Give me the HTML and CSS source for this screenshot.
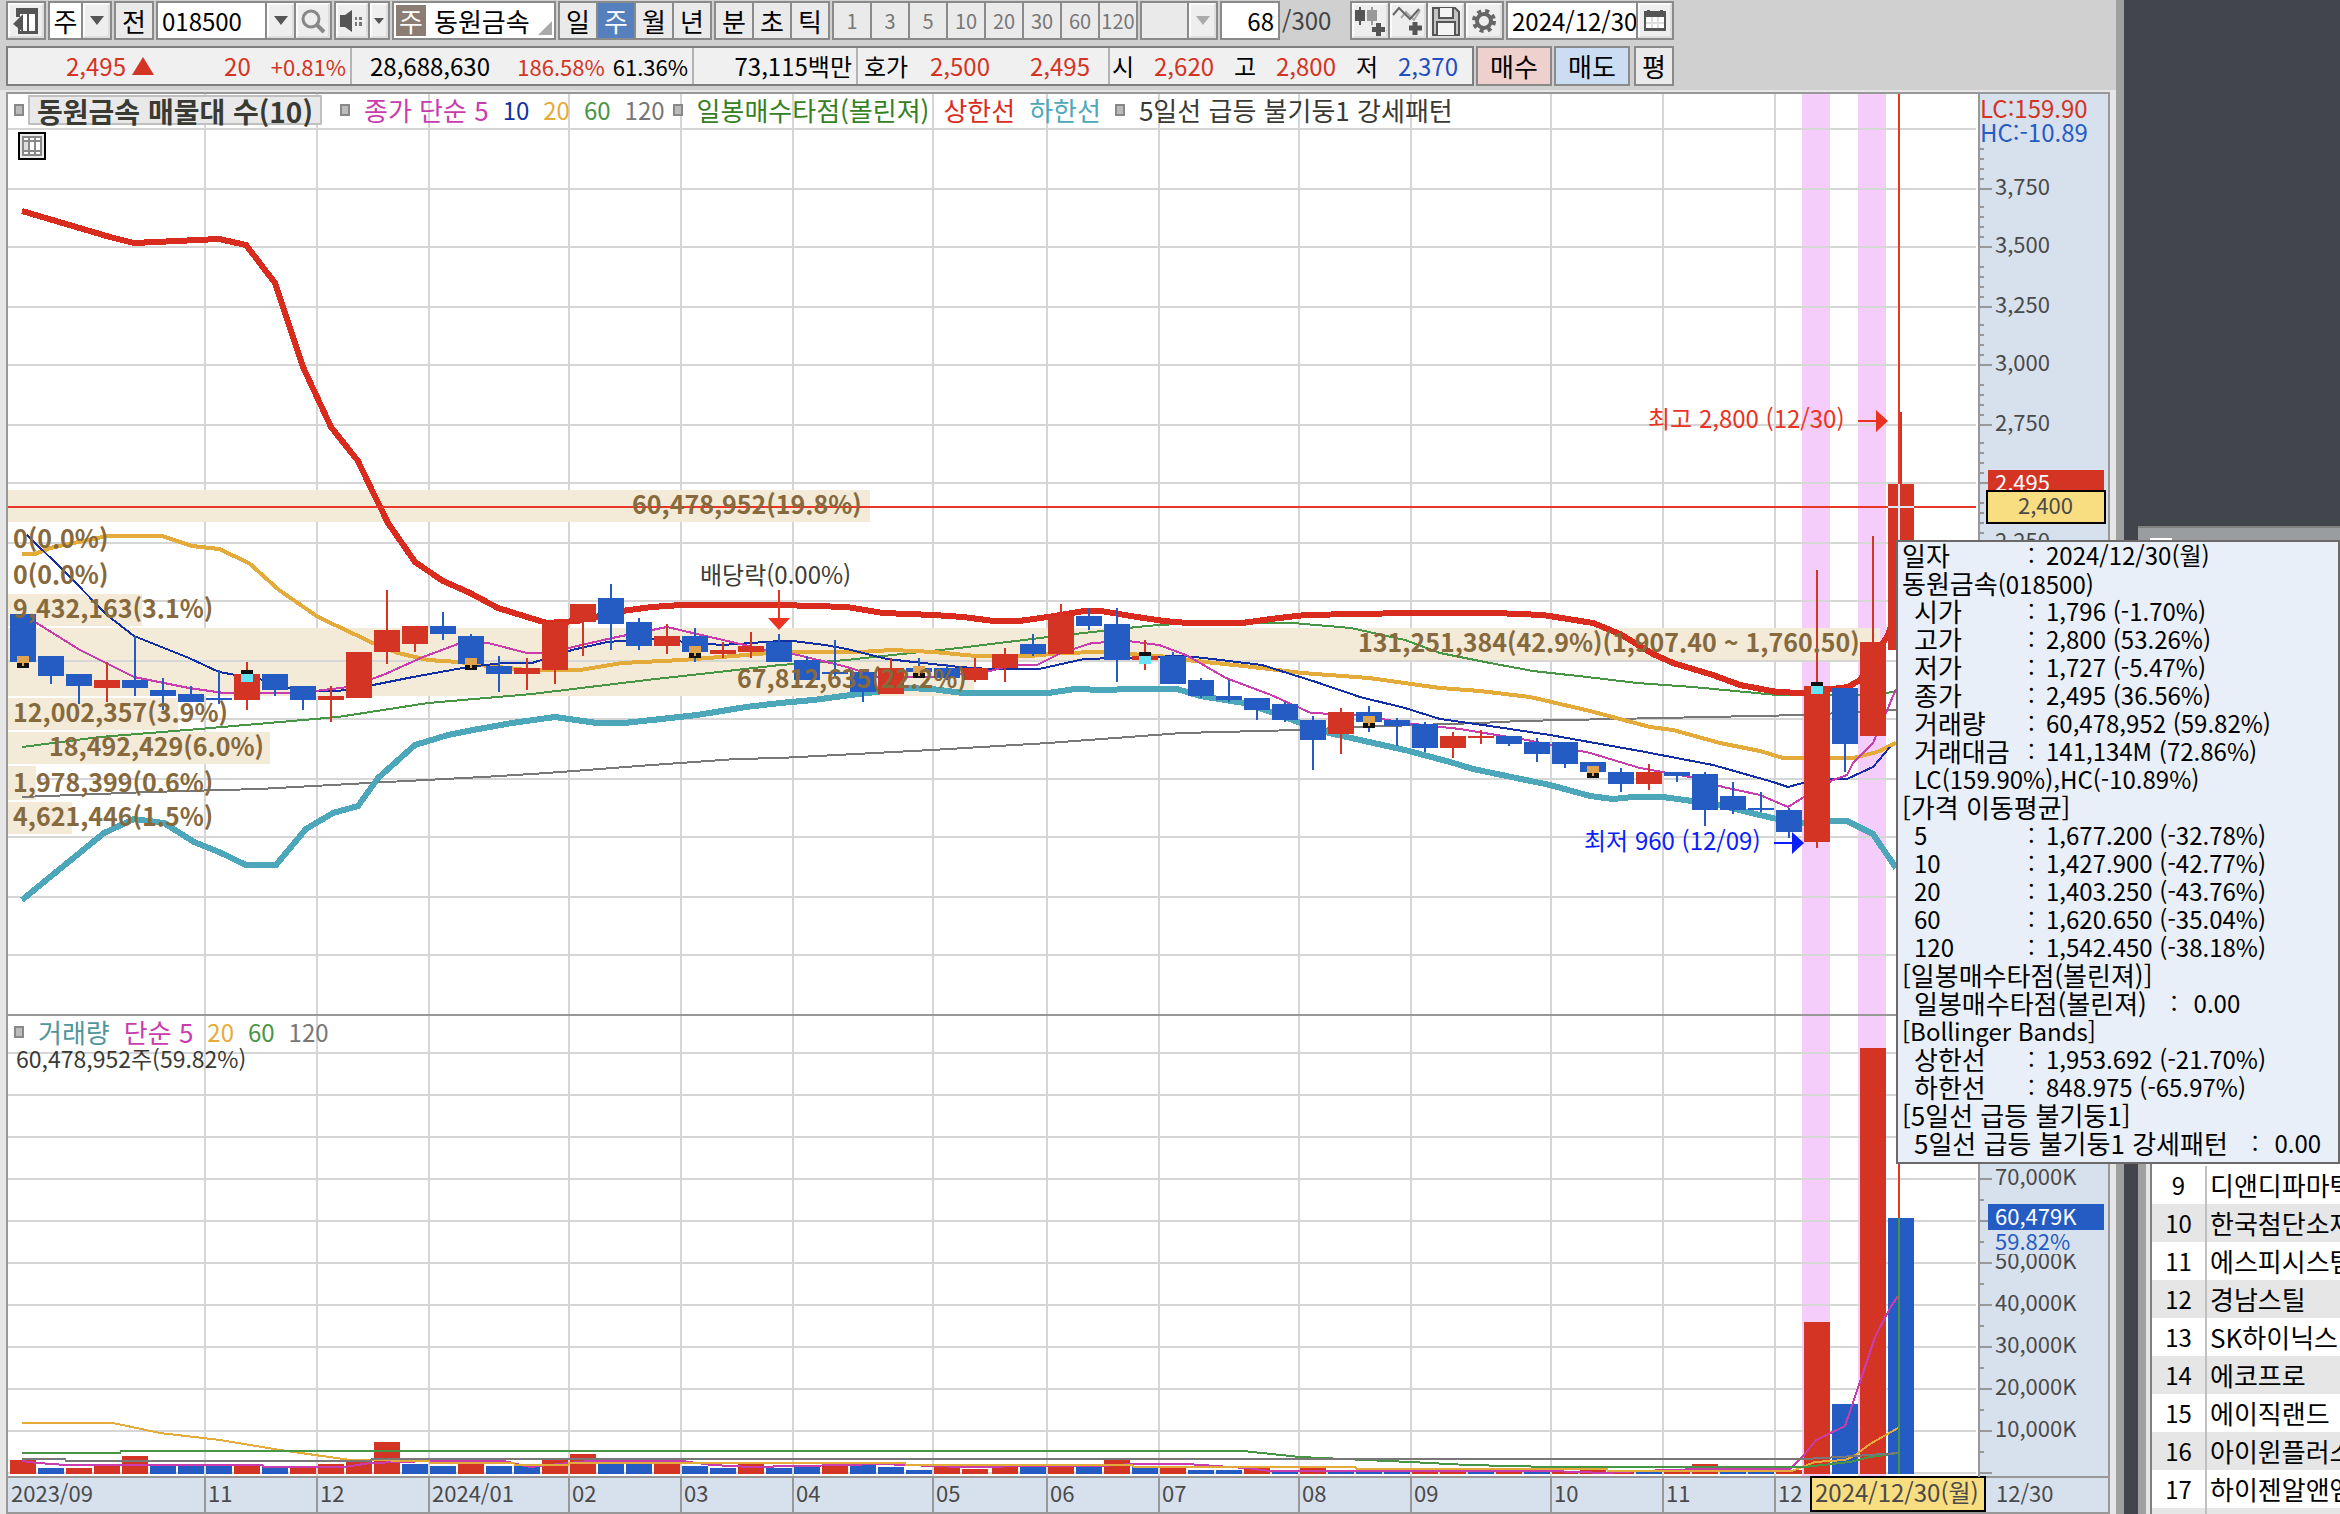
FILE: index.html
```html
<!DOCTYPE html>
<html lang="ko">
<head>
<meta charset="utf-8">
<title>동원금속 018500</title>
<link rel="stylesheet" href="styles.css">
</head>
<body>
<main class="chart-window">
  <form class="toolbar">
    <div class="group g-dock"><button type="button" class="tool" aria-label="패널"><svg width="28" height="32" viewBox="0 0 28 32"><path d="M4 3h22v26H6v-6h4v3h5V9h-5v3H4z" fill="#555"/><path d="M8 9h7v17H8z" fill="#fff"/><path d="M17 9h6v17h-6z" fill="#fff"/><path d="M11 9v18L1 19z" fill="#555"/></svg></button></div>
    <div class="group g-kind"><button type="button" class="field grow">주</button><button type="button" class="tool drop" aria-label="종류 목록"></button></div>
    <div class="group g-prev"><button type="button" class="grow">전</button></div>
    <div class="group g-code"><input class="field grow" aria-label="종목코드" value="018500"><button type="button" class="tool drop" aria-label="코드 목록"></button><button type="button" class="tool" aria-label="검색"><svg width="28" height="28" viewBox="0 0 28 28" fill="none" stroke="#888" stroke-width="3"><circle cx="12" cy="12" r="8"/><path d="M18 18l7 7" stroke-width="4"/></svg></button></div>
    <div class="group g-sound"><button type="button" class="tool grow" aria-label="소리"><svg width="28" height="28" viewBox="0 0 28 28"><path d="M2 8h5l7-5v22l-7-5H2z" fill="#555"/><path d="M17 10h2v3h-2zM17 15h2v4h-2zM21 10h3v3h-3zM21 15h3v4h-3z" fill="#777"/></svg></button><button type="button" class="tool drop slim" aria-label="소리 목록"></button></div>
    <div class="group g-name"><span class="badge">주</span><span class="name">동원금속</span></div>
    <div class="group g-period"><button type="button">일</button><button type="button" class="on">주</button><button type="button">월</button><button type="button">년</button></div>
    <div class="group g-intra"><button type="button">분</button><button type="button">초</button><button type="button">틱</button></div>
    <div class="group g-min"><button type="button">1</button><button type="button">3</button><button type="button">5</button><button type="button">10</button><button type="button">20</button><button type="button">30</button><button type="button">60</button><button type="button">120</button></div>
    <div class="group g-etc"><span class="grow"></span><button type="button" class="tool drop off" aria-label="분 목록" disabled></button></div>
    <div class="group g-count"><input class="field" aria-label="표시 개수" value="68"></div>
    <span class="total">/300</span>
    <div class="group g-icons">
      <button type="button" class="tool" aria-label="봉 추가"><svg width="32" height="30" viewBox="0 0 32 30"><path d="M5 1h2v3h4v11H7v4H5v-4H1V4h4z" fill="#555"/><path d="M17 1h2v3h4v11h-4v4h-2v-4h-4V4h4z" fill="#999"/><path d="M23 18h3v4h4v3h-4v4h-3v-4h-4v-3h4z" fill="#555" stroke="#555" stroke-width="2"/></svg></button>
      <button type="button" class="tool" aria-label="지표 추가"><svg width="32" height="30" viewBox="0 0 32 30" fill="none" stroke="#666" stroke-width="2"><path d="M9 12L14 6l8 8 6-10" stroke="#aaa"/><path d="M1 9L7 2l11 11 9-10"/><path d="M23 16v13M17 22h13" stroke-width="5" stroke="#555"/></svg></button>
      <button type="button" class="tool" aria-label="저장"><svg width="28" height="30" viewBox="0 0 28 30" fill="#c4c4c4" stroke="#555" stroke-width="2"><path d="M1 2h22l4 4v23H1z"/><path d="M7 2v10h14V2M5 29V16h18v13" fill="#f4f4f4"/></svg></button>
      <button type="button" class="tool" aria-label="설정"><svg width="28" height="28" viewBox="0 0 28 28" fill="none" stroke="#666"><circle cx="14" cy="14" r="7" stroke-width="4"/><circle cx="14" cy="14" r="10" stroke-width="4" stroke-dasharray="4 4"/></svg></button>
    </div>
    <div class="group g-date"><input class="field grow" aria-label="날짜" value="2024/12/30"><button type="button" class="tool" aria-label="달력"><svg width="22" height="22" viewBox="0 0 22 22"><path d="M0 1h3V0h3v1h10V0h3v1h3v20H0z" fill="#555"/><path d="M2 7h5v5H2zM9 7h4v5H9zM15 7h5v5h-5zM2 14h5v4H2zM9 14h4v4H9zM15 14h5v4h-5z" fill="#fff"/><path d="M7 7h2v11H7zM13 7h2v11h-2zM2 12h18v2H2z" fill="#ddd"/></svg></button></div>
  </form>

  <section class="quote" aria-label="시세">
    <div class="quote-box">
      <div class="cell q-price up"><span>2,495</span><i class="tri"></i><span>20</span><span class="pct">+0.81%</span></div>
      <div class="cell q-volume"><span>28,688,630</span><span class="up pct">186.58%</span><span class="pct">61.36%</span></div>
      <div class="cell q-amount"><span>73,115백만</span></div>
      <div class="cell q-bid"><span>호가</span><span class="up">2,500</span><span class="up">2,495</span></div>
      <div class="cell q-ohl"><span>시</span><span class="up">2,620</span><span>고</span><span class="up">2,800</span><span>저</span><span class="down">2,370</span></div>
    </div>
    <button type="button" class="order buy">매수</button>
    <button type="button" class="order sell">매도</button>
    <button type="button" class="order avg">평</button>
  </section>

  <section class="chart">
    <svg class="plot" viewBox="6 92 2104 1422" role="img" aria-label="동원금속 주봉 차트">
      <rect x="6" y="92" width="2104" height="1422" fill="#fff"/>
      <rect x="1980" y="92" width="130" height="1422" fill="#d7e1ee"/>
      <rect x="6" y="1477" width="2104" height="36" fill="#d7e1ee"/>
      <g id="bands" fill="#f5cdfb"><rect x="1802" y="94" width="28" height="1382"/><rect x="1858" y="94" width="28" height="1382"/></g>
      <g id="grid" class="crisp"></g>
      <g fill="#f3ead8">
        <rect x="8" y="490" width="862" height="32"/><rect x="8" y="594" width="134" height="32"/>
        <rect x="8" y="628" width="1872" height="32"/><rect x="8" y="662" width="966" height="34"/>
        <rect x="8" y="698" width="170" height="32"/><rect x="8" y="732" width="262" height="32"/>
        <rect x="8" y="766" width="28" height="34"/><rect x="8" y="802" width="64" height="32"/>
      </g>
      <g class="lines crisp">
        <polyline class="l120" points="22,797 149,792 259,789 368,783 483,777 547,773 652,765 736,759 780,758 932,750 1048,743 1182,733 1298,730 1356,727 1480,723 1520,721 1660,718 1803,715 1896,710"/>
        <polyline class="l60" points="22,747 100,737 199,729 338,717 428,703 532,694 647,680 736,670 780,665 847,660 883,656 959,648 1048,637 1137,627 1159,625 1220,622 1293,623 1351,628 1405,640 1440,653 1490,663 1533,671 1587,677 1637,683 1693,687 1777,695 1857,695 1896,692"/>
        <polyline class="l20" points="22,554 35,554 50,548 107,536 162,536 192,546 219,549 249,563 279,590 318,617 373,643 398,653 428,660 458,662 488,666 527,670 580,670 622,663 682,660 746,655 780,652 860,652 892,650 934,652 976,656 1030,656 1061,653 1101,652 1159,656 1186,660 1244,666 1302,673 1369,678 1440,688 1480,691 1530,697 1590,711 1620,719 1650,727 1673,730 1720,743 1760,751 1783,758 1853,758 1877,752 1896,743"/>
        <polyline class="lup" points="22,211 110,237 134,243 219,239 246,245 275,283 303,367 331,427 358,461 368,482 388,523 415,562 443,581 470,593 498,608 527,617 547,623 577,621 622,611 652,607 682,605 780,605 847,607 883,613 934,615 963,617 994,621 1019,621 1048,617 1084,611 1101,611 1137,617 1164,621 1188,623 1242,623 1271,619 1305,615 1409,613 1495,613 1543,615 1593,623 1620,634 1653,654 1673,663 1713,675 1740,685 1777,692 1803,693 1848,687 1860,680 1888,635 1900,600"/>
        <polyline class="llow" points="22,900 50,877 104,833 134,819 164,823 194,842 219,852 246,865 276,865 306,829 333,813 358,806 378,778 415,745 448,735 473,730 512,723 555,717 597,723 624,723 652,720 697,715 746,707 780,703 813,700 851,695 876,692 905,688 932,689 963,693 1048,693 1075,689 1104,690 1130,689 1177,689 1200,696 1244,703 1271,712 1298,722 1329,733 1369,742 1405,750 1450,762 1473,769 1550,785 1590,796 1613,799 1633,797 1663,797 1692,801 1720,805 1747,812 1777,819 1803,823 1830,821 1847,821 1873,834 1896,868"/>
        <polyline class="l10" points="27,535 65,572 107,615 134,636 189,658 219,672 264,680 299,691 338,691 373,685 413,677 468,667 503,663 532,663 572,650 607,642 652,639 722,645 780,641 793,641 825,645 847,649 887,659 959,667 990,669 1039,669 1084,659 1182,656 1204,658 1262,665 1316,682 1360,697 1405,708 1440,719 1490,726 1550,735 1640,751 1713,765 1773,782 1788,787 1803,783 1830,779 1847,779 1873,767 1890,747"/>
        <polyline class="l5" points="35,622 80,650 134,677 189,688 224,693 299,693 348,687 383,675 423,657 458,644 488,643 527,653 547,653 612,638 667,627 697,634 736,643 766,650 798,655 847,667 878,677 932,677 990,671 1012,665 1037,665 1061,653 1092,643 1128,641 1159,645 1186,655 1226,678 1271,695 1311,713 1360,715 1405,723 1460,729 1527,740 1590,753 1640,768 1690,777 1723,787 1760,795 1788,807 1807,795 1833,780 1847,775 1853,763 1873,743 1888,708 1896,689"/>
      </g>
      <g id="candles"></g>
      <g id="volumes"></g>
      <g class="lines crisp">
        <polyline class="l5" points="22,1461 38,1463 66,1465 262,1465 264,1467 345,1467 370,1463 430,1461 504,1461 530,1467 568,1463 590,1461 682,1461 712,1465 750,1467 846,1465 880,1464 962,1467 1046,1466 1102,1466 1132,1464 1187,1464 1245,1468 1270,1471 1550,1471 1606,1473 1640,1471 1700,1469 1790,1469 1804,1455 1816,1440 1845,1426 1860,1382 1875,1337 1890,1308 1898,1296"/>
        <polyline class="l20v" points="22,1423 113,1423 160,1433 220,1440 280,1450 350,1460 429,1461 430,1463 514,1463 515,1465 568,1465 569,1463 905,1463 906,1465 1132,1465 1134,1467 1355,1467 1357,1469 1607,1469 1608,1471 1792,1471 1815,1462 1845,1460 1854,1456 1870,1444 1898,1428"/>
        <polyline class="l60" points="22,1453 120,1453 121,1451 1243,1451 1300,1457 1410,1462 1468,1465 1552,1467 1804,1467 1850,1462 1870,1457 1898,1453"/>
        <polyline class="l120" points="22,1459 65,1459 66,1461 370,1461 372,1459 1804,1459 1840,1457 1898,1453"/>
      </g>
      <g class="crisp">
        <path d="M8 507H1976M1899 94V1218" stroke="#e8372a" stroke-width="2"/>
        <path d="M1888 507H1914M1899 484V540" stroke="#dfe4f8" stroke-width="2"/>
        <path d="M1899 1218V1474" stroke="#4a9640" stroke-width="2"/>
      </g>
      <g class="profile">
        <text x="632" y="514">60,478,952(19.8%)</text><text x="13" y="548">0(0.0%)</text><text x="13" y="584">0(0.0%)</text>
        <text x="13" y="618">9,432,163(3.1%)</text><text x="13" y="722">12,002,357(3.9%)</text><text x="49" y="756">18,492,429(6.0%)</text>
        <text x="13" y="792">1,978,399(0.6%)</text><text x="13" y="826">4,621,446(1.5%)</text><text x="737" y="688">67,812,635(22.2%)</text>
        <text x="1358" y="652">131,251,384(42.9%)(1,907.40 ~ 1,760.50)</text>
      </g>
      <text class="note" x="700" y="584">배당락(0.00%)</text>
      <path d="M778 590h2v28h10l-11 12-11-12h10z" fill="#ea3323"/>
      <text class="note high" x="1648" y="428">최고 2,800 (12/30)</text>
      <path d="M1858 420h18v-10l12 11-12 11v-10h-18z" fill="#ea3323"/>
      <text class="note low" x="1584" y="850">최저 960 (12/09)</text>
      <path d="M1774 842h18v-10l12 11-12 11v-10h-18z" fill="#0a1efa"/>

      <g class="axis" id="axis"></g>
      <text x="1980" y="118" fill="#d43423">LC:159.90</text>
      <text x="1980" y="142" fill="#255cc4">HC:-10.89</text>
      <rect x="1988" y="470" width="116" height="24" fill="#d43423"/>
      <g class="axis tags">
        <text x="1995" y="491" fill="#fff">2,495</text>
        <rect x="1987" y="491" width="118" height="32" fill="#f9dd81" stroke="#000" stroke-width="2"/>
        <text x="2018" y="514" fill="#4a4a4a">2,400</text>
        <rect x="1984" y="1230" width="120" height="24" fill="#d7e1ee"/>
        <rect x="1988" y="1204" width="116" height="26" fill="#255cc4"/>
        <text x="1995" y="1225" fill="#fff">60,479K</text>
        <text x="1995" y="1250" fill="#255cc4">59.82%</text>
      </g>
      <rect x="1811" y="1477" width="174" height="34" fill="#f9dd81" stroke="#000" stroke-width="2"/>
      <text x="1815" y="1502" fill="#4a4a4a">2024/12/30(월)</text>
      <g stroke="#989898" stroke-width="2" fill="none" class="crisp"><path d="M7 93H2109V1513H7zM1979 93V1477M8 1015H1979M8 1477H1810M1986 1477H2109"/></g>
    </svg>

    <div class="legend legend-price">
      <i class="mark"></i><button type="button" class="chip">동원금속 매물대 수(10)</button>
      <i class="mark"></i><span class="c5">종가 단순 5</span><span class="c10">10</span><span class="c20">20</span><span class="c60">60</span><span class="c120">120</span>
      <i class="mark"></i><span class="cg">일봉매수타점(볼린져)</span><span class="cr">상한선</span><span class="ct">하한선</span>
      <i class="mark"></i><span>5일선 급등 불기둥1 강세패턴</span>
    </div>
    <button type="button" class="table-toggle" aria-label="표 보기"><svg width="20" height="20" viewBox="0 0 20 20"><path d="M0 0h20v20H0z" fill="#888"/><path d="M2 2h4v2H2zM8 2h4v2H8zM14 2h4v2h-4zM8 6h4v8H8zM14 6h4v8h-4zM2 16h4v2H2zM8 16h4v2H8zM14 16h4v2h-4z" fill="#fff"/><path d="M2 6h4v8H2z" fill="#ddd"/></svg></button>
    <div class="legend legend-volume">
      <i class="mark"></i><span class="cv">거래량</span><span class="c5">단순 5</span><span class="c20">20</span><span class="c60">60</span><span class="c120">120</span>
    </div>
    <div class="legend volume-now">60,478,952주(59.82%)</div>
  </section>
</main>

<aside class="desktop">
  <div class="list-window">
    <header class="list-title"><i></i></header>
    <div class="list-body">
      <table>
        <tr><td>9</td><td>디앤디파마텍</td></tr><tr><td>10</td><td>한국첨단소재</td></tr><tr><td>11</td><td>에스피시스템스</td></tr>
        <tr><td>12</td><td>경남스틸</td></tr><tr><td>13</td><td>SK하이닉스</td></tr><tr><td>14</td><td>에코프로</td></tr>
        <tr><td>15</td><td>에이직랜드</td></tr><tr><td>16</td><td>아이윈플러스</td></tr><tr><td>17</td><td>하이젠알앤엠</td></tr><tr><td></td><td></td></tr>
      </table>
    </div>
  </div>
</aside>

<div class="tooltip" role="tooltip">
  <p class="row top"><b>일자</b><i>:</i><span>2024/12/30(월)</span></p>
  <p class="head"><b>동원금속</b>(018500)</p>
  <p class="row"><b>시가</b><i>:</i><span>1,796 (-1.70%)</span></p>
  <p class="row"><b>고가</b><i>:</i><span>2,800 (53.26%)</span></p>
  <p class="row"><b>저가</b><i>:</i><span>1,727 (-5.47%)</span></p>
  <p class="row"><b>종가</b><i>:</i><span>2,495 (36.56%)</span></p>
  <p class="row"><b>거래량</b><i>:</i><span>60,478,952 (59.82%)</span></p>
  <p class="row"><b>거래대금</b><i>:</i><span>141,134M (72.86%)</span></p>
  <p class="line">LC(159.90%),HC(-10.89%)</p>
  <p class="head"><b>[가격 이동평균]</b></p>
  <p class="row"><span>5</span><i>:</i><span>1,677.200 (-32.78%)</span></p>
  <p class="row"><span>10</span><i>:</i><span>1,427.900 (-42.77%)</span></p>
  <p class="row"><span>20</span><i>:</i><span>1,403.250 (-43.76%)</span></p>
  <p class="row"><span>60</span><i>:</i><span>1,620.650 (-35.04%)</span></p>
  <p class="row"><span>120</span><i>:</i><span>1,542.450 (-38.18%)</span></p>
  <p class="head"><b>[일봉매수타점(볼린져)]</b></p>
  <p class="line"><b>일봉매수타점(볼린져)</b><i>:</i><span>0.00</span></p>
  <p class="head">[Bollinger Bands]</p>
  <p class="row"><b>상한선</b><i>:</i><span>1,953.692 (-21.70%)</span></p>
  <p class="row"><b>하한선</b><i>:</i><span>848.975 (-65.97%)</span></p>
  <p class="head"><b>[5일선 급등 불기둥1]</b></p>
  <p class="line"><b>5일선 급등 불기둥1 강세패턴</b><i>:</i><span>0.00</span></p>
</div>
<script src="chart.js"></script>
</body>
</html>
```
FILE: styles.css
```css
* { box-sizing: border-box; }
body {
  margin: 0;
  display: grid;
  grid-template-columns: minmax(0, 1fr) 216px;
  position: relative;
  overflow: hidden;
  background: #43454d;
  color: #000;
  font: 24px/28px "Liberation Sans Narrow", "Noto Sans CJK KR", sans-serif;
}
button, input { font: inherit; color: inherit; border: 0; margin: 0; padding: 0; background: none; border-radius: 0; min-width: 0; }
p { margin: 0; }
i { font-style: normal; }

.chart-window { background: #e6e6e6; border-right: 8px solid #a0a0a0; }

/* toolbar */
.toolbar { display: flex; gap: 2px; padding: 1px 6px 5px; height: 46px; background: #d0d0d0; white-space: nowrap; line-height: 26px; }
.group { display: flex; height: 39px; border: 2px solid #8a8a8a; background: #8a8a8a; gap: 2px; flex: none; }
.group > * { background: #eaeaea; display: flex; align-items: center; justify-content: center; }
.group .tool { width: 34px; background: #eee; border: 2px solid #fbfbfb; border-right-color: #ddd; border-bottom-color: #ddd; }
.group .field { background: #fff; }
.group .grow { flex: 1; }
.group .drop { width: 27px; }
.group .drop::after { content: ""; border: 7px solid transparent; border-top: 9px solid #555; border-bottom: 0; }
.group .slim { width: 18px; }
.group .slim::after { border-width: 6px 5px 0; }
.group .off::after { border-top-color: #aaa; }
.g-dock { width: 40px; }
.group.g-dock .tool { width: 36px; }
.g-kind { width: 64px; }
.g-prev { width: 40px; }
.g-code { width: 176px; }
.g-code .field { padding-left: 4px; }
.g-sound { width: 56px; }
.g-name { width: 164px; gap: 0; position: relative; }
.g-name::after { content: ""; position: absolute; right: 2px; bottom: 3px; border: 7px solid transparent; border-right-color: #aaa; border-bottom-color: #aaa; }
.g-name .badge { width: 34px; background: #8b7d74; color: #fff; border: 2px solid #fff; }
.g-name .name { flex: 1; background: #fff; justify-content: flex-start; padding-left: 6px; }
.g-name, .quote, .g-kind, .g-prev, .g-period, .g-intra { font-size: 26px; }
.g-period { width: 154px; }
.g-intra { width: 116px; }
.g-min { width: 306px; color: #777; font-size: 20px; }
.g-period button, .g-intra button, .g-min button { flex: 1; }
.g-period .on { background: #557fbd; color: #fff; }
.g-etc { width: 78px; }
.g-count { width: 60px; }
.g-count .field { width: 100%; text-align: right; padding-right: 4px; }
.total { width: 66px; color: #444; line-height: 38px; }
.g-icons { width: 154px; }
.group.g-icons .tool { flex: 1; }
.g-date { width: 168px; }
.g-date .field { padding-left: 4px; }

/* quote strip */
.quote { display: flex; gap: 2px; height: 44px; padding: 0 6px 4px; background: #d0d0d0; white-space: nowrap; }
.quote-box { display: flex; width: 1468px; border: 2px solid #7e7e7e; background: #f0f0f0; font-size: 24px; }
.cell { display: flex; align-items: center; border-right: 2px solid #b4b4b4; }
.cell:last-child { border: 0; }
.pct { font-size: 22px; }
.q-price { width: 344px; padding-left: 58px; padding-right: 4px; }
.q-price span:nth-of-type(2) { margin-left: auto; margin-right: 20px; }
.tri { margin-left: 6px; border: 11px solid transparent; border-top: 0; border-bottom: 18px solid #d43423; }
.q-volume { width: 342px; padding: 0 4px 0 18px; gap: 8px; }
.q-volume span:first-child { margin-right: auto; }
.q-amount { width: 164px; justify-content: flex-end; padding-right: 4px; }
.q-bid { width: 252px; display: grid; grid-template-columns: 66px 100px auto; justify-content: start; padding-left: 6px; }
.q-ohl { flex: 1; padding: 0 14px 0 2px; justify-content: space-between; }
.up { color: #d43423; }
.down { color: #1f4fc0; }
.order { width: 76px; border: 2px solid #8a8a8a; background: #eaeaea; }
.buy { background: #eed0cd; }
.sell { background: #cbddf2; }
.avg { width: 40px; margin-left: 2px; }

/* chart */
.chart { position: relative; margin: 2px 6px 0; }
.plot { display: block; width: 100%; height: auto; }
.plot text { font: 24px "Liberation Sans Narrow", "Noto Sans CJK KR", sans-serif; }
.crisp { shape-rendering: crispEdges; }
.lines polyline { fill: none; stroke-width: 2; }
.lines .l5 { stroke: #c93cae; }
.lines .l10 { stroke: #1230a4; }
.lines .l20 { stroke: #e5ab3a; stroke-width: 4; }
.lines .l20v { stroke: #e5ab3a; }
.lines .l60 { stroke: #479645; }
.lines .l120 { stroke: #787878; }
.lines .lup { stroke: #d92c1e; stroke-width: 6; }
.lines .llow { stroke: #4da7bb; stroke-width: 6; }
.plot .profile text { font-weight: bold; font-size: 25px; fill: #86693c; }
.plot .note { fill: #3c3c34; }
.plot .high { fill: #ea3323; }
.plot .low { fill: #0a1efa; }
.plot .axis text { font-size: 22px; }
#axis text { fill: #4a4a4a; }

.legend { position: absolute; display: flex; align-items: center; white-space: nowrap; color: #3a3a34; font-size: 26px; gap: 14px; }
.legend-price { left: 8px; top: 3px; height: 30px; }
.legend-volume { left: 8px; top: 926px; }
.legend.volume-now { left: 10px; top: 952px; font-size: 23px; }
.mark { width: 10px; height: 12px; border: 2px solid #888; background: #bbb; }
.legend .chip { height: 30px; margin: 0 4px 0 -10px; padding: 0 7px; border: 2px solid #c0c0c0; background: #e9e9e9; font-weight: bold; font-size: 28px; }
.legend .c10, .legend .c20, .legend .c60, .legend .c120 { font-size: 24px; }
.legend .c120 + .mark { margin-left: -6px; }
.c5 { color: #c93cae; } .c10 { color: #1230a4; } .c20 { color: #e5ab3a; } .c60 { color: #479645; } .c120 { color: #777; }
.cg { color: #35801f; } .cr { color: #d92c1e; } .ct { color: #4da7bb; } .cv { color: #4f959b; }
.table-toggle { position: absolute; left: 12px; top: 40px; width: 28px; height: 28px; border: 2px solid #000; background: #e9e9e9; display: flex; align-items: center; justify-content: center; }

/* neighbouring window */
.desktop { height: 0; min-height: 100%; padding: 526px 0 0 14px; overflow: hidden; min-width: 0; }
.list-window { border-left: 8px solid #a0a0a0; background: #e6e6e6; }
.list-title { height: 28px; background: #9a9da0; border-top: 2px solid #808080; padding: 10px 0 0 4px; margin-left: -8px; }
.list-title i { display: block; width: 22px; height: 4px; margin-left: 8px; background: #fff; }
.list-body { margin-left: 4px; padding-top: 612px; border-left: 2px solid #808080; background: #fff; }
.list-body table { border-collapse: collapse; width: 240px; table-layout: fixed; font-size: 26px; }
.list-body td { height: 38px; padding: 0 0 0 3px; white-space: nowrap; overflow: hidden; line-height: 38px; }
.list-body td:first-child { width: 54px; text-align: center; border-right: 2px solid #c0c0c0; padding: 0; font-size: 24px; }
.list-body tr:nth-child(even) { background: #e6e6e6; }

/* hover data box */
.tooltip { position: absolute; top: 540px; right: 0; width: 444px; height: 624px; padding: 0 0 0 4px; border: 2px solid #6a6a6a; background: #e8eff8; white-space: nowrap; }
.tooltip p { height: 28px; line-height: 26px; }
.tooltip b { font-weight: normal; font-size: 26px; }
.tooltip .row { display: grid; grid-template-columns: 114px 18px 1fr; padding-left: 12px; }
.tooltip .top { grid-template-columns: 126px 18px 1fr; padding-left: 0; }
.tooltip .line { padding-left: 12px; display: flex; }
.tooltip .line i { margin: 0 16px 0 24px; }
```
FILE: chart.js
```js
const NS = "http://www.w3.org/2000/svg";
const RED = "#d43423", BLUE = "#255cc4";
const el = (parent, name, attrs, text) => {
  const node = document.createElementNS(NS, name);
  for (const key in attrs) node.setAttribute(key, attrs[key]);
  if (text) node.textContent = text;
  document.getElementById(parent).appendChild(node);
};
const rect = (parent, x, y, width, height, fill) => el(parent, "rect", { x, y, width, height, fill });
const left = i => 10 + 28 * i + (i >= 35 ? 2 : 0);

/* direction, body top, body bottom, high, low */
const candles = [
  "b",614,662,614,662, "b",656,676,656,684, "b",674,686,674,704, "r",680,688,662,702, "b",680,688,636,696,
  "b",690,696,678,710, "b",694,702,686,702, "b",698,700,670,704, "r",674,700,662,710, "b",674,690,674,696,
  "b",686,700,686,710, "r",696,700,686,722, "r",652,698,652,698, "r",630,652,590,664, "r",626,644,626,652,
  "b",626,634,612,640, "b",636,664,634,664, "b",666,674,656,692, "r",668,674,658,690, "r",622,670,620,684,
  "r",604,622,604,656, "b",598,624,584,650, "b",622,646,618,650, "r",636,646,624,654, "b",636,652,628,662,
  "r",650,654,642,658, "r",646,652,632,658, "b",642,662,634,662, "b",660,680,656,680, "b",672,674,640,676,
  "b",672,692,672,702, "r",668,694,658,694, "b",668,672,658,676, "b",668,678,664,680, "r",668,680,658,682,
  "r",654,668,648,682, "b",644,654,634,656, "r",616,654,604,654, "b",616,626,608,630, "b",624,660,608,682,
  "r",656,660,640,670, "b",656,684,652,684, "b",680,696,678,698, "b",696,700,680,702, "b",698,710,698,720,
  "b",704,720,702,722, "b",720,740,716,770, "r",712,734,708,754, "b",712,722,706,732, "b",720,726,718,746,
  "b",724,748,722,752, "r",736,748,732,758, "r",736,738,730,744, "b",736,744,736,746, "b",742,754,738,762,
  "b",742,764,742,768, "b",762,772,762,774, "b",772,784,768,792, "r",772,784,764,790, "b",772,776,772,782,
  "b",774,810,772,826, "b",796,810,782,814, "b",808,810,792,812, "b",810,832,808,838, "r",686,842,570,848,
  "b",688,744,688,772, "r",642,736,536,736, "r",484,650,412,650
];
for (let i = 0; i * 5 < candles.length; i++) {
  const [dir, top, bottom, high, low] = candles.slice(i * 5, i * 5 + 5);
  const fill = dir === "r" ? RED : BLUE;
  rect("candles", left(i), top, 26, bottom - top, fill);
  rect("candles", left(i) + 12, high, 2, low - high, fill);
}

/* signal markers: candle index, top */
[[0, 656], [16, 658], [24, 646], [32, 666], [48, 716], [56, 766]].forEach(([i, y]) => {
  rect("candles", left(i) + 7, y + 6, 12, 6, "#111");
  rect("candles", left(i) + 7, y, 12, 7, "#e0a44e");
  rect("candles", left(i) + 12, y + 6, 2, 4, "#e0a44e");
});
[[8, 670], [40, 652], [64, 682]].forEach(([i, y]) => {
  rect("candles", left(i) + 7, y, 12, 6, "#111");
  rect("candles", left(i) + 7, y + 4, 12, 8, "#67e4f4");
});

const volumes = [
  "r1460","b1468","r1468","r1465","r1456","b1465","b1465","b1465","r1465","b1467","r1467","r1464","r1460","r1442",
  "b1464","b1466","r1463","b1466","b1466","r1460","r1454","b1464","b1464","r1463","b1466","b1468","r1464","b1468",
  "b1467","r1464","b1465","b1467","b1470","r1467","r1469","r1466","b1466","r1466","b1467","r1460","b1467","r1467",
  "b1470","b1470","r1468","b1472","r1468","b1472","b1472","b1472","r1472","r1472","b1472","r1472","b1472","r1472",
  "r1470","r1472","b1472","r1472","r1464","b1472","b1472","r1470","r1322","b1404","r1048","b1218"
];
volumes.forEach((v, i) => {
  const top = Number(v.slice(1));
  rect("volumes", left(i), top, 26, 1474 - top, v[0] === "r" ? RED : BLUE);
});

const GRID = "#d6d6d6", TICK = "#989898";
[129, 189, 247, 307, 365, 425, 483, 543, 601, 661, 719, 779, 837, 897, 955].forEach(y => rect("grid", 8, y - 1, 1968, 2, GRID));
for (let y = 1053; y <= 1473; y += 42) {
  rect("grid", 8, y - 1, 1968, 2, GRID);
  rect("axis", 1980, y - 1, 12, 2, TICK);
  if (y < 1473) rect("axis", 1980, y + 20, 4, 2, TICK);
}
const months = [[205, "11"], [317, "12"], [429, "2024/01"], [569, "02"], [681, "03"], [793, "04"], [933, "05"], [1047, "06"],
  [1159, "07"], [1299, "08"], [1411, "09"], [1551, "10"], [1663, "11"], [1775, "12"]];
months.forEach(([x, label]) => {
  rect("grid", x - 1, 94, 2, 1382, GRID);
  rect("axis", x - 1, 1478, 2, 34, TICK);
  el("axis", "text", { x: x + 3, y: 1502 }, label);
});
el("axis", "text", { x: 11, y: 1502 }, "2023/09");
el("axis", "text", { x: 1996, y: 1502 }, "12/30");
[[189, "3,750"], [247, "3,500"], [307, "3,250"], [365, "3,000"], [425, "2,750"], [483, ""], [543, "2,250"]].forEach(([y, label]) => {
  rect("axis", 1980, y - 1, 12, 2, TICK);
  for (let n = 1; n < 5; n++) rect("axis", 1980, y - 1 - n * 10, 4, 2, TICK);
  if (label) el("axis", "text", { x: 1995, y: y + 6 }, label);
});
[[1179, "70,000K"], [1263, "50,000K"], [1305, "40,000K"], [1347, "30,000K"], [1389, "20,000K"], [1431, "10,000K"]]
  .forEach(([y, label]) => el("axis", "text", { x: 1995, y: y + 6 }, label));
```
